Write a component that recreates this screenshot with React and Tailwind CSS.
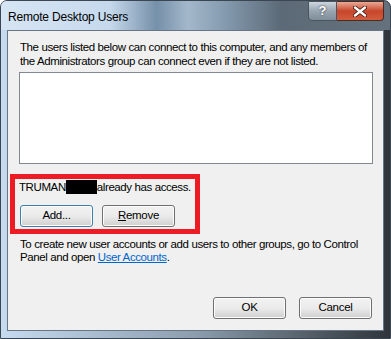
export default function App() {
  const btn =
    "h-[22px] w-[73px] rounded-[3px] border border-[#707070] bg-gradient-to-b from-[#f2f2f2] via-[#ebebeb] to-[#cfcfcf] text-[11.5px] tracking-[-0.3px] leading-none text-black flex items-center justify-center shadow-[inset_0_0_0_1px_#fcfcfc]";

  return (
    <div
      className="relative w-[391px] h-[339px] overflow-hidden rounded-t-[7px] border border-[#3b4652] bg-gradient-to-r from-[#c6dbf0] via-[#8c9eae] to-[#2f353b] text-[#1e1e1e] whitespace-nowrap"
      style={{ fontFamily: '"Liberation Sans", Arial, sans-serif' }}
    >
      {/* glass title strip */}
      <div className="flex h-[29px] bg-[linear-gradient(90deg,#d6e5f4_0%,#c6d9ec_28%,#7590a9_40%,#a3b8ca_48%,#8399ad_58%,#5c6a77_72%,#65727d_100%)]">
        <div className="pl-[7px] pt-[9px] text-[12px] tracking-[-0.2px] leading-[14px] text-black">Remote Desktop Users</div>
        <div className="ml-auto mr-[6px] flex h-[20px] self-start">
          <div className="w-[29px] h-[20px] rounded-bl-[4px] border border-[#4b5560] bg-gradient-to-b from-[#cdd6de] via-[#98a6b2] to-[#7f8e9b] flex items-center justify-center text-white text-[13px] font-bold [text-shadow:0_0_2px_#222]">
            ?
          </div>
          <div className="w-[47px] h-[20px] rounded-br-[4px] border border-l-0 border-[#4b2a22] bg-gradient-to-b from-[#e9a995] via-[#c7452a] to-[#d35c3d] flex items-center justify-center">
            <svg width="14" height="11" viewBox="0 0 14 11">
              <path d="M2 1.5 L12 9.5 M12 1.5 L2 9.5" stroke="#3a1a12" strokeWidth="4" strokeLinecap="round" />
              <path d="M2 1.5 L12 9.5 M12 1.5 L2 9.5" stroke="#fff" strokeWidth="2.4" strokeLinecap="round" />
            </svg>
          </div>
        </div>
      </div>

      {/* client area */}
      <div className="ml-[6px] w-[377px] h-[301px] border border-[#687584] bg-[#f0f0f0] flex flex-col text-[11.5px] tracking-[-0.4px]">
        <p className="pl-[12px] pt-[9px] leading-[14px] text-black">
          The users listed below can connect to this computer, and any members of
          <br />
          the Administrators group can connect even if they are not listed.
        </p>

        <div className="ml-[11px] mt-[4px] w-[354px] h-[92px] border border-[#828790] bg-white" />

        <div className="ml-[2px] mt-[10px] w-[190px] h-[60px] border-[5px] border-[#ed1c24] pl-[4px] pt-[1px]">
          <div className="flex items-center h-[14px] leading-[14px] text-black">
            TRUMAN<span className="inline-block w-[31px] h-[14px] bg-black" />already has access.
          </div>
          <div className="mt-[11px] ml-[1px] flex gap-[9px]">
            <button className={btn + " !border-[#3c7fb1] shadow-[inset_0_0_0_1px_#48d5fb]"}>Add...</button>
            <button className={btn}>
              <span>
                <span className="underline">R</span>emove
              </span>
            </button>
          </div>
        </div>

        <p className="pl-[12px] mt-[4px] leading-[13px] text-black">
          To create new user accounts or add users to other groups, go to Control
          <br />
          Panel and open <span className="text-[#0066cc] underline">User Accounts</span>.
        </p>

        <div className="mt-auto mb-[11px] mr-[11px] flex justify-end gap-[13px]">
          <button className={btn}>OK</button>
          <button className={btn}>Cancel</button>
        </div>
      </div>
    </div>
  );
}
